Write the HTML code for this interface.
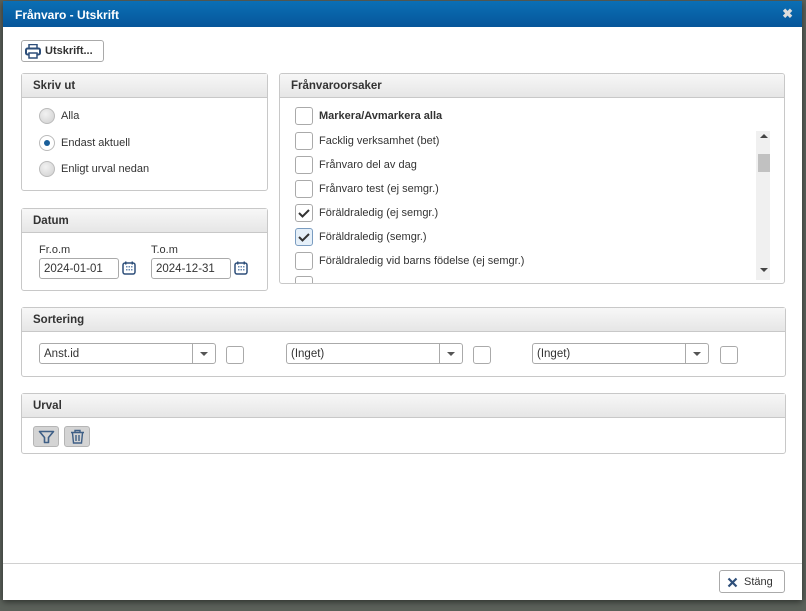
<!DOCTYPE html>
<html><head><meta charset="utf-8"><style>
*{box-sizing:border-box}
body{margin:0;width:806px;height:611px;background:#5b615a;font-family:"Liberation Sans",Arial,sans-serif;font-size:11px;color:#333;position:relative;overflow:hidden}
.dlg{position:absolute;left:3px;top:1px;width:799px;height:599px;background:#fff;box-shadow:0 2px 6px rgba(0,0,0,.5)}
.title{height:26px;background:linear-gradient(#0b6fb5,#06569a);color:#fff;font-weight:bold;font-size:12px;padding:7px 0 0 12px}
.x{position:absolute;right:9px;top:5px;color:#ddd;font-size:13px;font-weight:bold}
.p{position:absolute;border:1px solid #c8c8c8;border-radius:3px;background:#fff}
.ph{height:24px;background:linear-gradient(#f7f7f7,#e6e6e6);border-bottom:1px solid #c8c8c8;font-weight:bold;font-size:11.5px;padding:6px 0 0 11px;color:#333}
.abs{position:absolute}
.rad{position:absolute;width:16px;height:16px;border-radius:50%;border:1px solid #bbb;background:radial-gradient(circle at 40% 35%,#f2f2f2,#cfcfcf)}
.rad.on{background:#fff}
.rad.on:after{content:"";position:absolute;left:4px;top:4px;width:6px;height:6px;border-radius:50%;background:#1a5f9a}
.cb{position:absolute;width:18px;height:18px;border:1px solid #aaa;border-radius:3px;background:#fff}
.inp{position:absolute;height:21px;border:1px solid #aaa;border-radius:3px;padding:4px 4px;font-size:11.5px;color:#333}
.btn{position:absolute;border:1px solid #aaa;border-radius:3px;background:#fff;font-size:11px;color:#333}
.lbl{position:absolute;font-size:11px;color:#333}
</style></head><body>
<div class="dlg">
<div class="title">Frånvaro - Utskrift</div><div class="x">✖</div>
<div class="btn" style="left:18px;top:39px;width:83px;height:22px;padding:4px 0 0 23px;font-weight:bold">Utskrift...
<svg class="abs" style="left:3px;top:3px" width="16" height="15" viewBox="0 0 16 15"><rect x="4" y="0.5" width="8" height="4" fill="none" stroke="#2e4f7a" stroke-width="1.5"/><rect x="1" y="4.5" width="14" height="6" rx="1.5" fill="none" stroke="#2e4f7a" stroke-width="2"/><rect x="4" y="9" width="8" height="5" fill="#fff" stroke="#2e4f7a" stroke-width="1.5"/></svg></div>

<div class="p" style="left:18px;top:72px;width:247px;height:118px"><div class="ph">Skriv ut</div>
<div class="rad" style="left:17px;top:34px"></div><div class="lbl" style="left:39px;top:36px">Alla</div>
<div class="rad on" style="left:17px;top:61px"></div><div class="lbl" style="left:39px;top:63px">Endast aktuell</div>
<div class="rad" style="left:17px;top:87px"></div><div class="lbl" style="left:39px;top:89px">Enligt urval nedan</div>
</div>

<div class="p" style="left:18px;top:207px;width:247px;height:83px"><div class="ph">Datum</div>
<div class="lbl" style="left:17px;top:35px">Fr.o.m</div><div class="lbl" style="left:129px;top:35px">T.o.m</div>
<div class="inp" style="left:17px;top:49px;width:80px">2024-01-01</div>
<div class="inp" style="left:129px;top:49px;width:80px">2024-12-31</div>
<svg class="abs" style="left:100px;top:52px" width="14" height="14"><rect x="1" y="2" width="12" height="11" rx="2" fill="none" stroke="#2e4f7a" stroke-width="1.5"/><rect x="3" y="0.5" width="1.5" height="3" fill="#2e4f7a"/><rect x="9.5" y="0.5" width="1.5" height="3" fill="#2e4f7a"/><g fill="#6a8ab0"><rect x="4" y="5" width="1.5" height="1.5"/><rect x="6.5" y="5" width="1.5" height="1.5"/><rect x="9" y="5" width="1.5" height="1.5"/><rect x="4" y="8" width="1.5" height="1.5"/><rect x="6.5" y="8" width="1.5" height="1.5"/><rect x="9" y="8" width="1.5" height="1.5"/></g></svg>
<svg class="abs" style="left:212px;top:52px" width="14" height="14"><rect x="1" y="2" width="12" height="11" rx="2" fill="none" stroke="#2e4f7a" stroke-width="1.5"/><rect x="3" y="0.5" width="1.5" height="3" fill="#2e4f7a"/><rect x="9.5" y="0.5" width="1.5" height="3" fill="#2e4f7a"/><g fill="#6a8ab0"><rect x="4" y="5" width="1.5" height="1.5"/><rect x="6.5" y="5" width="1.5" height="1.5"/><rect x="9" y="5" width="1.5" height="1.5"/><rect x="4" y="8" width="1.5" height="1.5"/><rect x="6.5" y="8" width="1.5" height="1.5"/><rect x="9" y="8" width="1.5" height="1.5"/></g></svg>
</div>

<div class="p" style="left:276px;top:72px;width:506px;height:211px;overflow:hidden"><div class="ph">Frånvaroorsaker</div>
<div class="cb" style="left:15px;top:33px"></div><div class="lbl" style="left:39px;top:36px;font-weight:bold">Markera/Avmarkera alla</div>
<div class="abs" style="left:476px;top:57px;width:14px;height:149px;background:#f0f0f0"></div>
<div class="abs" style="left:478px;top:80px;width:12px;height:18px;background:#c1c1c1"></div>
<div class="abs" style="left:480px;top:60px;width:0;height:0;border:4px solid transparent;border-bottom:4px solid #444;border-top:0"></div>
<div class="abs" style="left:480px;top:194px;width:0;height:0;border:4px solid transparent;border-top:4px solid #444;border-bottom:0"></div>
<div class="cb" style="left:15px;top:58px"></div><div class="lbl" style="left:39px;top:61px">Facklig verksamhet (bet)</div>
<div class="cb" style="left:15px;top:82px"></div><div class="lbl" style="left:39px;top:85px">Frånvaro del av dag</div>
<div class="cb" style="left:15px;top:106px"></div><div class="lbl" style="left:39px;top:109px">Frånvaro test (ej semgr.)</div>
<div class="cb" style="left:15px;top:130px"><svg width="16" height="16"><path d="M3 8l3.5 3.5L13 5" fill="none" stroke="#333" stroke-width="2"/></svg></div><div class="lbl" style="left:39px;top:133px">Föräldraledig (ej semgr.)</div>
<div class="cb" style="left:15px;top:154px;background:#e6f0f9;border-color:#7a9cc0"><svg width="16" height="16"><path d="M3 8l3.5 3.5L13 5" fill="none" stroke="#333" stroke-width="2"/></svg></div><div class="lbl" style="left:39px;top:157px">Föräldraledig (semgr.)</div>
<div class="cb" style="left:15px;top:178px"></div><div class="lbl" style="left:39px;top:181px">Föräldraledig vid barns födelse (ej semgr.)</div>
<div class="cb" style="left:15px;top:202px"></div>
</div>

<div class="p" style="left:18px;top:306px;width:765px;height:70px"><div class="ph">Sortering</div>
<div class="inp" style="left:17px;top:35px;width:177px">Anst.id<div class="abs" style="right:0;top:0;width:23px;height:19px;border-left:1px solid #aaa"><div class="abs" style="left:7px;top:8px;border:4px solid transparent;border-top:4px solid #555;border-bottom:0"></div></div></div>
<div class="cb" style="left:204px;top:38px"></div>
<div class="inp" style="left:264px;top:35px;width:177px">(Inget)<div class="abs" style="right:0;top:0;width:23px;height:19px;border-left:1px solid #aaa"><div class="abs" style="left:7px;top:8px;border:4px solid transparent;border-top:4px solid #555;border-bottom:0"></div></div></div>
<div class="cb" style="left:451px;top:38px"></div>
<div class="inp" style="left:510px;top:35px;width:177px">(Inget)<div class="abs" style="right:0;top:0;width:23px;height:19px;border-left:1px solid #aaa"><div class="abs" style="left:7px;top:8px;border:4px solid transparent;border-top:4px solid #555;border-bottom:0"></div></div></div>
<div class="cb" style="left:698px;top:38px"></div>
</div>

<div class="p" style="left:18px;top:392px;width:765px;height:61px"><div class="ph">Urval</div>
<div class="btn" style="left:11px;top:32px;width:26px;height:21px;background:#d4d4d4;border-color:#b5b5b5"><svg class="abs" style="left:4px;top:2px" width="17" height="16"><path d="M1.5 2.5h14l-5 6v5h-4v-5z" fill="none" stroke="#3e5f86" stroke-width="1.6" stroke-linejoin="round"/></svg></div>
<div class="btn" style="left:42px;top:32px;width:26px;height:21px;background:#d4d4d4;border-color:#b5b5b5"><svg class="abs" style="left:5px;top:2px" width="15" height="16"><path d="M1 3.5h13M5 3.5V1.5h5v2M2.5 4l1 10h8l1-10M6 6v6M9 6v6" fill="none" stroke="#3e5f86" stroke-width="1.4"/></svg></div>
</div>

<div class="abs" style="left:0;top:562px;width:799px;height:1px;background:#d0d0d0"></div>
<div class="btn" style="left:716px;top:569px;width:66px;height:23px;padding:5px 0 0 24px;font-size:11px">Stäng
<svg class="abs" style="left:7px;top:6px" width="11" height="11"><path d="M1.5 1.5l8 8M9.5 1.5l-8 8" stroke="#2e4f7a" stroke-width="2.2"/></svg></div>
</div>
</body></html>
